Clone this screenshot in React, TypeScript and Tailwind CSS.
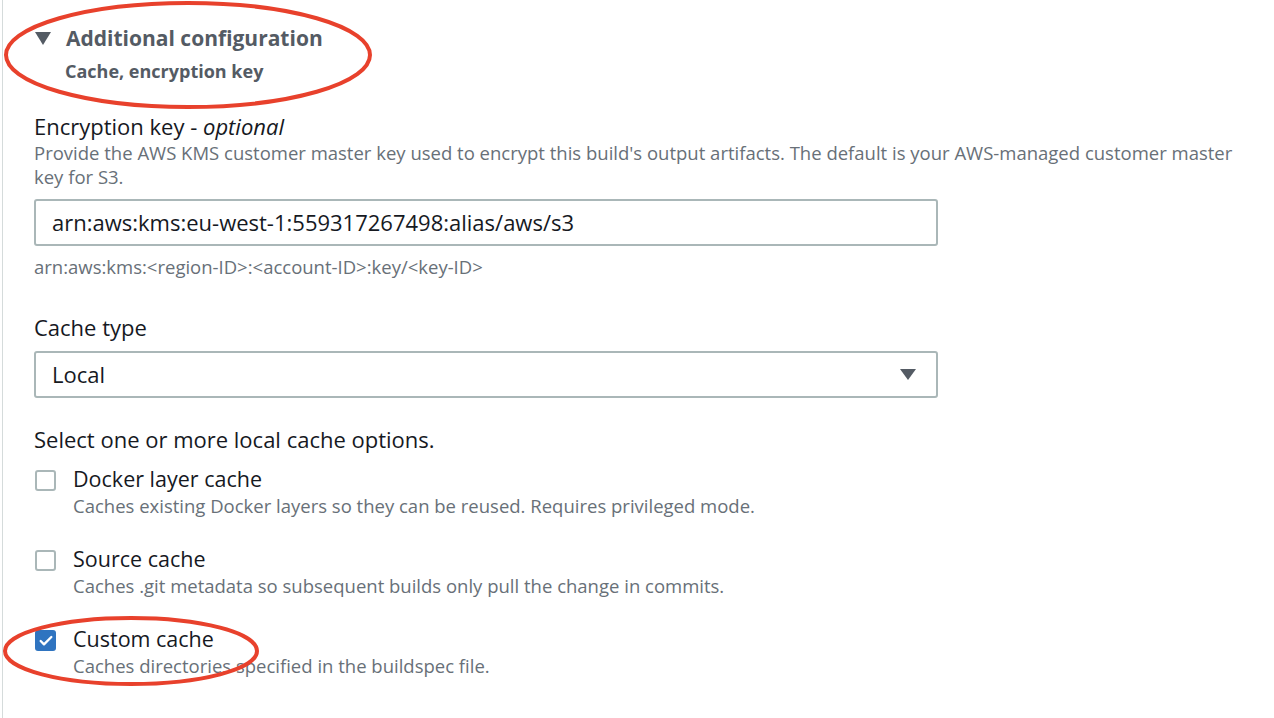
import { Check } from "lucide-react";

type CacheOptionProps = {
  label: string;
  hint: string;
  checked?: boolean;
};

const CacheOption = ({ label, hint, checked }: CacheOptionProps) => {
  return (
    <div className="flex gap-[17px]">
      <div className="pt-[5px]">
        {checked ? (
          <div className="w-[21px] h-[21px] rounded-[3px] bg-[#2f74c0] flex items-center justify-center">
            <Check size={16} strokeWidth={3.5} className="text-white" />
          </div>
        ) : (
          <div className="w-[21px] h-[21px] rounded-[3px] border-2 border-[#aab7b8] bg-white" />
        )}
      </div>
      <div>
        <p className="text-[21.5px] leading-[28px] text-[#16191f]">{label}</p>
        <p className="mt-[1px] text-[18.5px] leading-[24px] text-[#687078]">{hint}</p>
      </div>
    </div>
  );
};

export default function App() {
  return (
    <div
      className="relative w-[1274px] h-[718px] bg-white overflow-hidden"
      style={{ fontFamily: '"Open Sans", "Noto Sans", sans-serif' }}
    >
      <div className="ml-[2px] h-full border-l border-[#d5dbdb] pl-[31px] pt-[24px]">
        {/* expandable header */}
        <div className="flex items-center gap-[15px]">
          <svg width="16" height="13" viewBox="0 0 16 13" className="ml-[1px]">
            <polygon points="0,0 16,0 8,13" fill="#545b64" />
          </svg>
          <h2 className="text-[21px] leading-[28px] font-bold text-[#545b64]">Additional configuration</h2>
        </div>
        <p className="mt-[7px] ml-[31px] text-[18px] leading-[24px] font-bold text-[#545b64]">
          Cache, encryption key
        </p>

        {/* encryption key */}
        <div className="mt-[29px]">
          <p className="text-[22px] leading-[28px] text-[#16191f]">
            Encryption key - <i>optional</i>
          </p>
          <p className="mt-[1px] text-[18.5px] leading-[24px] text-[#687078] pr-[20px]">
            Provide the AWS KMS customer master key used to encrypt this build's output artifacts. The default is your
            AWS-managed customer master key for S3.
          </p>
          <div className="mt-[10px] w-[904px] h-[47px] border-2 border-[#aab7b8] rounded-[3px] flex items-center px-[16px]">
            <span className="text-[22px] text-[#16191f]">arn:aws:kms:eu-west-1:559317267498:alias/aws/s3</span>
          </div>
          <p className="mt-[9px] text-[18.5px] leading-[24px] text-[#687078]">
            arn:aws:kms:&lt;region-ID&gt;:&lt;account-ID&gt;:key/&lt;key-ID&gt;
          </p>
        </div>

        {/* cache type */}
        <div className="mt-[34px]">
          <p className="text-[22px] leading-[28px] text-[#16191f]">Cache type</p>
          <div className="mt-[10px] w-[904px] h-[47px] border-2 border-[#aab7b8] rounded-[3px] flex items-center justify-between pl-[16px] pr-[20px]">
            <span className="text-[22px] text-[#16191f]">Local</span>
            <svg width="16" height="11" viewBox="0 0 16 11">
              <polygon points="0,0 16,0 8,11" fill="#545b64" />
            </svg>
          </div>
        </div>

        {/* local cache options */}
        <p className="mt-[27px] text-[22px] leading-[28px] text-[#16191f]">Select one or more local cache options.</p>
        <div className="mt-[12px] flex flex-col gap-[27px] pl-[1px]">
          <CacheOption
            label="Docker layer cache"
            hint="Caches existing Docker layers so they can be reused. Requires privileged mode."
          />
          <CacheOption
            label="Source cache"
            hint="Caches .git metadata so subsequent builds only pull the change in commits."
          />
          <CacheOption label="Custom cache" hint="Caches directories specified in the buildspec file." checked />
        </div>
      </div>

      {/* red annotation rings */}
      <svg className="absolute inset-0 pointer-events-none" width="1274" height="718">
        <ellipse cx="188" cy="55" rx="182" ry="52" fill="none" stroke="#e8412c" strokeWidth="4" />
        <ellipse cx="131" cy="651" rx="126" ry="33" fill="none" stroke="#e8412c" strokeWidth="4" />
      </svg>
    </div>
  );
}
